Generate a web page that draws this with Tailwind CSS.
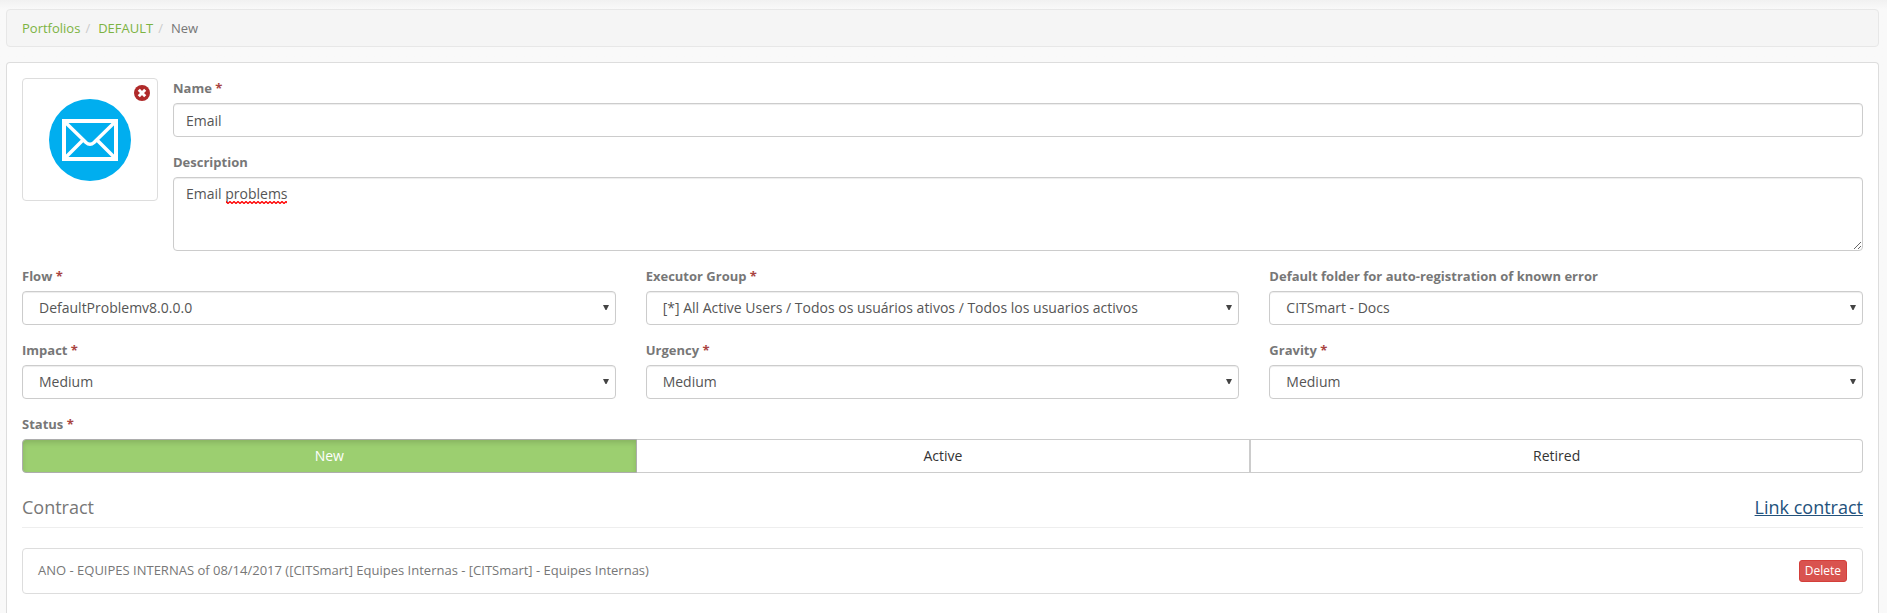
<!DOCTYPE html>
<html lang="en">
<head>
<meta charset="utf-8">
<title>New problem</title>
<script src="https://cdn.jsdelivr.net/npm/@tailwindcss/browser@4"></script>
</head>
<body class="min-h-screen flex flex-col bg-[#f9f9f9] pt-[9px] pl-1.5 pr-2 font-['Open_Sans',sans-serif] text-[13px] leading-5 text-[#777] bg-linear-to-b from-[#f1f1f1] to-[#f9f9f9] to-[9px]">
  <nav aria-label="Breadcrumb" class="mb-[15px] rounded border border-[#e7e7e7] bg-[#f5f5f5] px-[15px] py-2">
    <ol class="flex">
      <li><a href="#" class="text-[#7cb342]">Portfolios</a><span class="px-[5px] text-[#ccc]">/</span></li>
      <li class="pl-[3px]"><a href="#" class="text-[#7cb342]">DEFAULT</a><span class="px-[5px] text-[#ccc]">/</span></li>
      <li class="pl-[3px]">New</li>
    </ol>
  </nav>

  <main class="grow rounded-t border border-b-0 border-[#ddd] bg-white p-[15px] pb-0">
    <form class="flex flex-col gap-[15px]">
      <div class="flex items-start gap-[15px]">
        <div class="relative flex h-[123px] w-34 shrink-0 items-center justify-center rounded border border-[#ddd]">
          <svg class="size-[82px]" viewBox="0 0 82 82" role="img" aria-label="Email">
            <circle cx="41" cy="41" r="41" fill="#00aeef"/>
            <g fill="none" stroke="#fff" stroke-width="4">
              <rect x="15" y="22" width="52" height="38"/>
              <path d="M16 23 L37 43.500 Q41 47 45 43.500 L66 23 M16 59 L34 41 M66 59 L48 41" stroke-width="3.500"/>
            </g>
          </svg>
          <button type="button" aria-label="Remove image" class="absolute top-1.5 right-[7px] size-4">
            <svg class="size-4" viewBox="0 0 16 16"><circle cx="8" cy="8" r="8" fill="#b02a2a"/><path d="M4.800 4.800 L11.200 11.200 M11.200 4.800 L4.800 11.200" stroke="#fff" stroke-width="3"/></svg>
          </button>
        </div>
        <div class="flex grow flex-col gap-[15px]">
          <div>
            <label for="name" class="mb-[5px] block font-bold">Name <span class="text-[#a94442]">*</span></label>
            <input id="name" type="text" value="Email" class="block h-[34px] w-full rounded border border-[#ccc] bg-white px-3 text-sm text-[#555] shadow-[inset_0_1px_1px_rgba(0,0,0,0.075)]">
          </div>
          <div>
            <label for="description" class="mb-[5px] block font-bold">Description</label>
            <div class="relative">
              <textarea id="description" spellcheck="false" class="block h-[74px] w-full rounded border border-[#ccc] bg-white px-3 py-1.5 text-sm text-[#555] shadow-[inset_0_1px_1px_rgba(0,0,0,0.075)]">Email problems</textarea>
              <svg class="pointer-events-none absolute top-6 left-[53px] h-[3px] w-[61px]" aria-hidden="true">
                <defs><pattern id="squiggle" width="4" height="3" patternUnits="userSpaceOnUse"><path d="M-1 1.500 L0 .5 L2 2.500 L4 .5 L5 1.500" fill="none" stroke="#f00" stroke-width="1.300"/></pattern></defs>
                <rect width="61" height="3" fill="url(#squiggle)"/>
              </svg>
            </div>
          </div>
        </div>
      </div>

      <svg class="hidden"><symbol id="arrow" viewBox="0 0 6 5"><path d="M0 0 H6 L3.500 5 H2.500 Z" fill="#444"/></symbol></svg>
      <div class="grid grid-cols-3 gap-x-[30px] gap-y-[15px]">
        <div>
          <label for="flow" class="mb-[5px] block font-bold">Flow <span class="text-[#a94442]">*</span></label>
          <div class="relative">
            <select id="flow" class="block h-[34px] w-full appearance-none rounded border border-[#ccc] bg-white pr-6 pl-4 text-sm text-[#555] shadow-[inset_0_1px_1px_rgba(0,0,0,0.075)]"><option>DefaultProblemv8.0.0.0</option></select>
            <svg class="pointer-events-none absolute top-[14px] right-[7px] h-[5px] w-1.5" aria-hidden="true"><use href="#arrow"/></svg>
          </div>
        </div>
        <div>
          <label for="group" class="mb-[5px] block font-bold">Executor Group <span class="text-[#a94442]">*</span></label>
          <div class="relative">
            <select id="group" class="block h-[34px] w-full appearance-none rounded border border-[#ccc] bg-white pr-6 pl-4 text-sm text-[#555] shadow-[inset_0_1px_1px_rgba(0,0,0,0.075)]"><option>[*] All Active Users / Todos os usuários ativos / Todos los usuarios activos</option></select>
            <svg class="pointer-events-none absolute top-[14px] right-[7px] h-[5px] w-1.5" aria-hidden="true"><use href="#arrow"/></svg>
          </div>
        </div>
        <div>
          <label for="folder" class="mb-[5px] block font-bold">Default folder for auto-registration of known error</label>
          <div class="relative">
            <select id="folder" class="block h-[34px] w-full appearance-none rounded border border-[#ccc] bg-white pr-6 pl-4 text-sm text-[#555] shadow-[inset_0_1px_1px_rgba(0,0,0,0.075)]"><option>CITSmart - Docs</option></select>
            <svg class="pointer-events-none absolute top-[14px] right-[7px] h-[5px] w-1.5" aria-hidden="true"><use href="#arrow"/></svg>
          </div>
        </div>
        <div>
          <label for="impact" class="mb-[5px] block font-bold">Impact <span class="text-[#a94442]">*</span></label>
          <div class="relative">
            <select id="impact" class="block h-[34px] w-full appearance-none rounded border border-[#ccc] bg-white pr-6 pl-4 text-sm text-[#555] shadow-[inset_0_1px_1px_rgba(0,0,0,0.075)]"><option>Medium</option></select>
            <svg class="pointer-events-none absolute top-[14px] right-[7px] h-[5px] w-1.5" aria-hidden="true"><use href="#arrow"/></svg>
          </div>
        </div>
        <div>
          <label for="urgency" class="mb-[5px] block font-bold">Urgency <span class="text-[#a94442]">*</span></label>
          <div class="relative">
            <select id="urgency" class="block h-[34px] w-full appearance-none rounded border border-[#ccc] bg-white pr-6 pl-4 text-sm text-[#555] shadow-[inset_0_1px_1px_rgba(0,0,0,0.075)]"><option>Medium</option></select>
            <svg class="pointer-events-none absolute top-[14px] right-[7px] h-[5px] w-1.5" aria-hidden="true"><use href="#arrow"/></svg>
          </div>
        </div>
        <div>
          <label for="gravity" class="mb-[5px] block font-bold">Gravity <span class="text-[#a94442]">*</span></label>
          <div class="relative">
            <select id="gravity" class="block h-[34px] w-full appearance-none rounded border border-[#ccc] bg-white pr-6 pl-4 text-sm text-[#555] shadow-[inset_0_1px_1px_rgba(0,0,0,0.075)]"><option>Medium</option></select>
            <svg class="pointer-events-none absolute top-[14px] right-[7px] h-[5px] w-1.5" aria-hidden="true"><use href="#arrow"/></svg>
          </div>
        </div>
      </div>

      <div>
        <div id="status" class="mb-[5px] font-bold">Status <span class="text-[#a94442]">*</span></div>
        <div role="group" aria-labelledby="status" class="grid grid-cols-3 text-sm text-[#333]">
          <button type="button" aria-pressed="true" class="relative -mr-px h-[34px] rounded-l border border-[#adadad] bg-[#9ccf70] text-white shadow-[inset_0_3px_5px_rgba(0,0,0,0.125)]">New</button>
          <button type="button" aria-pressed="false" class="-mr-px h-[34px] border border-[#ccc] bg-white">Active</button>
          <button type="button" aria-pressed="false" class="h-[34px] rounded-r border border-l-2 border-[#ccc] bg-white">Retired</button>
        </div>
      </div>
    </form>

    <section class="mt-5">
      <div class="mb-5 flex items-center justify-between border-b border-[#eee] pt-0.5 pb-2 text-lg leading-6">
        <h2>Contract</h2>
        <a href="#" class="text-[#23527c] underline">Link contract</a>
      </div>
      <div class="flex justify-between rounded border border-[#ddd] px-[15px] py-[11px]">
        <span>ANO - EQUIPES INTERNAS of 08/14/2017 ([CITSmart] Equipes Internas - [CITSmart] - Equipes Internas)</span>
        <button type="button" class="h-[22px] rounded-[3px] border border-[#d43f3a] bg-[#d9534f] px-[5px] text-xs text-white">Delete</button>
      </div>
    </section>
  </main>
</body>
</html>
